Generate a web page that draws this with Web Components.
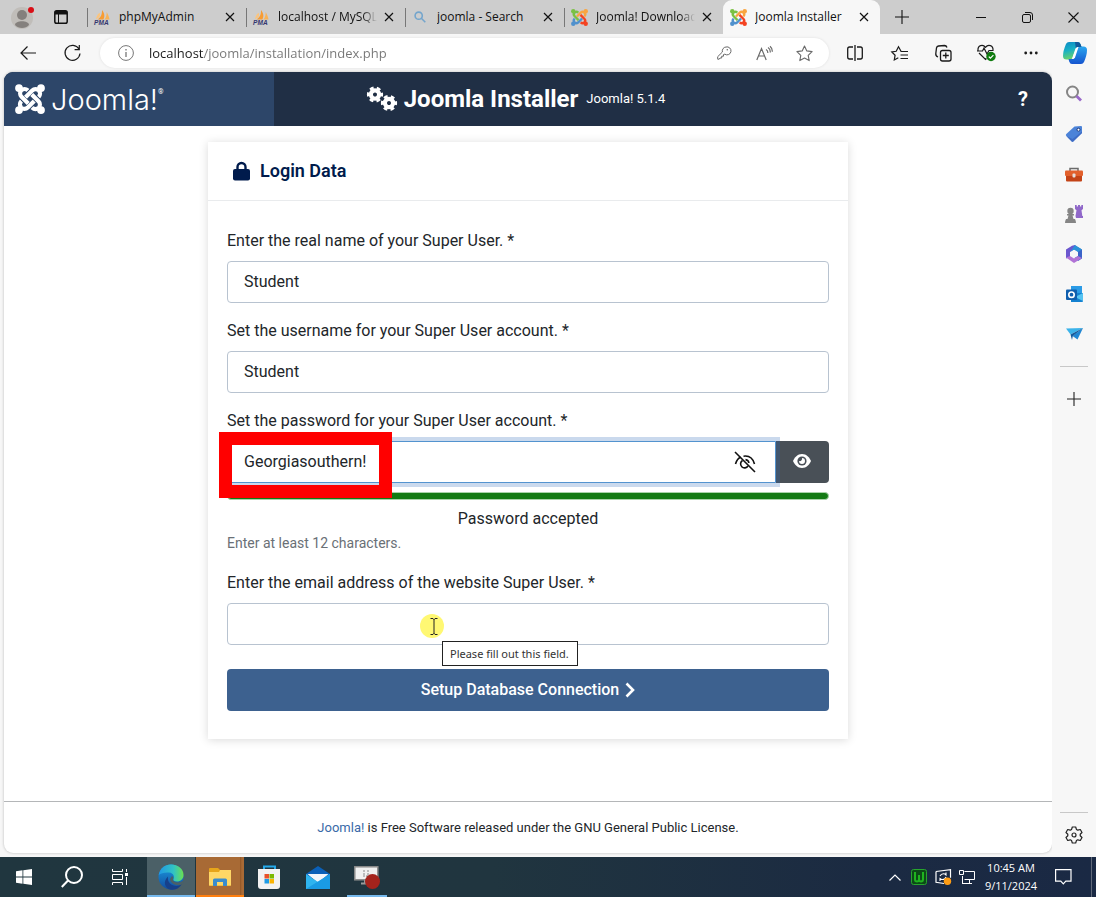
<!DOCTYPE html>
<html lang="en">
<head>
<meta charset="utf-8">
<title>Joomla Installer</title>
<style>
  html, body { margin: 0; height: 100%; }
  body { font-family: "Open Sans", sans-serif; background: #f7f7f7; color: #222; }
</style>
</head>
<body>
<desk-screen></desk-screen>

<script>
const arm = (c, gap) => [0, 90, 180, 270].map((a, i) =>
  `<g transform="rotate(${a} 12 12)" fill="none" stroke="${c[i]}">
    ${gap ? `<path d="M8.6 20.4 15.5 13.5" stroke="${gap}" stroke-width="4.6"/>` : ''}
    <path stroke-width="3.3" d="M5.2 13.6 5 13.8C3.6 15.3 3.6 17.4 5 18.9 6.4 20.3 8.7 20.3 10.2 18.8L15.6 13.4"/>
    <circle cx="3.2" cy="20.8" r="3.1" fill="${c[i]}" stroke="none"/></g>`).join('');

const gear = (x, y) => `<g transform="translate(${x} ${y})" fill="none" stroke="currentColor">
  <circle r="4.1" stroke-width="4.2"/><circle r="6.6" stroke-width="3" stroke-dasharray="3.8 3.11" stroke-dashoffset="1.9"/></g>`;

const line = (d, w = 1.2) => `<path fill="none" stroke="currentColor" stroke-width="${w}" d="${d}"/>`;

/* name: [width, height, markup] */
const ICONS = {
  avatar: [24, 24, '<circle cx="11" cy="13" r="11" fill="#c0bdb9"/><circle cx="11" cy="10" r="5" fill="#84807d"/><path d="M4 20c0-5 14-5 14 0-3 4-11 4-14 0z" fill="#84807d"/><circle cx="20" cy="5" r="3" fill="#d90e16"/>'],
  tabs: [14, 14, '<rect x=".8" y=".8" width="12.4" height="12.4" rx="1.8" fill="none" stroke="#111" stroke-width="1.5"/><path d="M1 1h12v3.5H1z" fill="#111"/><path d="M4.5 4v9" stroke="#111"/>'],
  pma: [18, 16, '<path d="M6 3c1 3 0 5-4 7 1-4 2-6 4-7z" fill="#fbc47d"/><path d="M8.500 0c3 4 3 7 1.500 10H3.500c4-2 5-5 5-10z" fill="#f89c32"/><path d="M13.500 2c1.500 3 2.500 5 3 8h-5.500c2-2 2.500-5 2.500-8z" fill="#f9b255"/><text x="0" y="16" font-family="Liberation Sans" font-size="7" font-weight="bold" font-style="italic" fill="#34376f">PMA</text>'],
  find: [12, 12, '<g fill="none" stroke="#74a5cc" stroke-width="1.6"><circle cx="4.7" cy="4.7" r="3.6"/><path d="m7.3 7.3 4 4"/></g>'],
  joomla: [24, 24, arm(['#5091cd', '#7ac143', '#f9a541', '#f44321'])],
  joomlaWhite: [24, 24, arm(['#fff', '#fff', '#fff', '#fff'], '#2d4669')],
  x: [10, 10, line('m1 1 8 8M9 1 1 9')],
  plus: [14, 14, line('M7 0v14M0 7h14', 1.1)],
  min: [10, 10, line('M0 5.5h10', 1)],
  restore: [11, 11, line('M3 2.5h4q1.5 0 1.5 1.5v5q0 1.500-1.500 1.500H2q-1.500 0-1.500-1.500V4q0-1.500 1.500-1.500zM3 .5h5q2.500 0 2.500 2.500v5', 1)],
  close: [11, 11, line('m.5.5 10 10M10.500.5l-10 10', 1.1)],
  back: [16, 14, line('M16 7H1M7.500.5 1 7l6.500 6.500', 1.2)],
  reload: [17, 17, line('M15 4A7.500 7.500 0 1 0 16 8.500M15.300 0v4.700h-4.700', 1.2)],
  info: [16, 16, '<circle cx="8" cy="8" r="7.400" fill="none" stroke="#777"/><path d="M8 7v5M8 4v1.500" stroke="#777" stroke-width="1.300"/>'],
  key: [14, 14, '<path d="M9 1a4 4 0 1 1-1.200 7.200L6.500 8.500v1.700H4.700V12H3l-.8 1.200H.7v-2.500L5.400 6A4 4 0 0 1 9 1z" fill="none" stroke="#6a6a6a"/><circle cx="10.300" cy="3.700" r=".8" fill="#6a6a6a"/>'],
  read: [17, 15, '<g fill="none" stroke="#6a6a6a" stroke-width="1.200"><path d="M.8 14 5.500 2.500 10.200 14M2.500 10h6M10 3.500q2 1 1.800 3.500M12 1.500q2.500 1.500 2.300 5M14 .3q2.500 2 2.300 5.500"/></g>'],
  star: [17, 17, '<path d="m8.500 1 2.300 4.900 5.300.7-3.900 3.700 1 5.300-4.700-2.600-4.700 2.600 1-5.300L.9 6.600l5.300-.7z" fill="none" stroke="#6a6a6a" stroke-width="1.100" stroke-linejoin="round"/>'],
  split: [16, 16, line('M6 2H2.500Q.7 2 .7 4v8q0 2 1.800 2H6M10 2h3.500q1.800 0 1.800 2v8q0 2-1.800 2H10M8 0v16', 1.3)],
  favs: [17, 15, line('M10 5.200 7.500.8 5.200 5.300.8 6l3.300 3.200L3.300 14l4-2.200M9.500 5.500H17M9.500 9H17M9.500 12.500H17', 1.2)],
  collect: [17, 17, line('M3 12Q.5 11 .8 8.500L1.500 2.800Q1.800 1.200 3.500 1l6-.5q1.800 0 2.500 2M7.500 5.500h6.500q2 0 2 2v6.500q0 2-2 2H7.500q-2 0-2-2V7.500q0-2 2-2zM10.800 7.500v6M7.800 10.500h6', 1.3)],
  heart: [20, 18, line('M1 6.500C.5 1 6 0 8.500 3.300 11 0 16.500 1 16 6.500H12L10 10 7 4 5.500 7H0M2 9l6.500 6.500 1-1', 1.2) + '<circle cx="14" cy="12.500" r="4.700" fill="#107c10"/><path d="m11.800 12.600 1.600 1.600 3-3" fill="none" stroke="#fff" stroke-width="1.200"/>'],
  dots: [14, 4, '<g fill="currentColor"><circle cx="1.700" cy="2" r="1.400"/><circle cx="7" cy="2" r="1.400"/><circle cx="12.300" cy="2" r="1.400"/></g>'],
  copilot: [24, 22, '<defs><linearGradient id="a" x2=".3" y2="1"><stop stop-color="#0d88c5"/><stop offset=".5" stop-color="#18b0c5"/><stop offset="1" stop-color="#6bd36b"/></linearGradient><linearGradient id="b" x2="0" y2="1"><stop stop-color="#2aa6ef"/><stop offset="1" stop-color="#1554cf"/></linearGradient></defs><path d="M6 0h9q2 0 2.700 2.500L18.500 5H15q-2 0-2.700 2l-3 9Q8.800 17.500 7 17.500H3.500Q0 17.500 0 14 0 9 3 2q1-2 3-2z" fill="url(#a)"/><path d="M18 22H9q-2 0-2.800-2.500L5.500 17H9q2 0 2.700-2l3-9q.5-1.500 2.300-1.500h3.500Q24 4.500 24 8q0 5-3 12-1 2-3 2z" fill="url(#b)"/><path d="M12 0h3q2 0 2.700 2.500L18.500 5H15q-1.500 0-2.200 1z" fill="#135a9c"/><path d="M13 6.500q.6-1.500 2.500-1.500L12 15.500Q11.300 17 9 17z" fill="#fff"/>'],
  search: [18, 18, '<circle cx="7.500" cy="7" r="5.500" fill="none" stroke="#858585" stroke-width="2"/><path d="m11.500 11 4.500 4.500" stroke="#9a69c9" stroke-width="2.800"/>'],
  tag: [18, 18, '<path d="M9.500 1.500 16 1q1 0 1 1v6L8.500 16.300q-1 1-2 0L1.300 11q-1-1 0-2z" fill="#4c83d8"/><path d="M1.300 11 6.500 16.300q1 1 2 0L17 8V6.500L7.500 14z" fill="#3f6cc4"/><circle cx="13.500" cy="4.700" r="1.500" fill="#fff" stroke="#1f3c7d"/>'],
  tools: [18, 15, '<path d="M5 4V1.500h8V4" fill="none" stroke="#6b6b6b" stroke-width="1.500"/><rect y="3.500" width="18" height="5.500" rx="1" fill="#e2602c"/><path d="M1 9h16v4.500q0 1-1 1H2q-1 0-1-1z" fill="#c34317"/><rect x="7.500" y="6.500" width="3" height="4" rx="1" fill="#e6dedb"/>'],
  games: [18, 18, '<g fill="#858585"><circle cx="5.500" cy="6" r="3.200"/><path d="M2 9h7v1.500H7.500L8.500 14h-6l1-3.500H2zM1 14h9q1 2 1 4H0q0-2 1-4z"/></g><path d="M10 0h1.700v1.500h1.300V0h2v1.500h1.300V0H18v4l-1.500 1.200.8 5.800H18v2h-7l-.5-2 1-5.800L10 4z" fill="#9068c9"/>'],
  m365: [18, 18, '<path d="M9 0 17 4.500v9L13 16l-3.500-3 3.500-2V7z" fill="#3a63c8"/><path d="M1 13.500v-9L7 .8 10 0l3 6-4-1.500L5 7v5z" fill="#6b57ce"/><path d="m1 12.500 4-1.500 4 2.500L13 11l4 2-8 5z" fill="#b173d6"/><path d="m5 7 5-7 7 4.500L13 7 9 4.500z" fill="#2b92d8"/>'],
  outlook: [17, 17, '<path d="M5 0h11v9H5z" fill="#2b9be6"/><path d="M5 7h12v8q0 1-1 1H5z" fill="#1481d0"/><path d="M17 7v8L9 11z" fill="#55c3f1"/><rect y="3.500" width="11" height="10.500" rx="1" fill="#0f5eae"/><circle cx="5.500" cy="8.700" r="2.700" fill="none" stroke="#fff" stroke-width="1.600"/>'],
  send: [17, 14, '<path d="M0 1.500 17 1 4.500 7.500z" fill="#3bb3ea"/><path d="M17 1 11.500 12.500 6.500 9z" fill="#1f86d3"/><path d="M4.500 7.500 17 1 6.800 9 6 13z" fill="#155a9b"/>'],
  cog: [18, 18, '<path d="m7.300 1 3.400 0 .7 2.400 1.400.8L15.300 3.500 17 6.500 15.200 8.200v1.600L17 11.500l-1.700 3-2.500-.7-1.400.8-.7 2.400H7.300l-.7-2.400-1.400-.8-2.500.7-1.700-3 1.800-1.700V8.200L1 6.500l1.700-3 2.500.7 1.400-.8z" fill="none" stroke="#222" stroke-width="1.200" stroke-linejoin="round"/><circle cx="9" cy="9" r="2" fill="none" stroke="#222" stroke-width="1.200"/>'],
  gears: [31, 26, gear(8, 8.500) + gear(22, 17)],
  lock: [17, 20, '<path d="M4.500 9V6a4 4 0 0 1 8 0v3" fill="none" stroke="#001b4c" stroke-width="2.400"/><rect y="8" width="17" height="11.500" rx="2" fill="#001b4c"/>'],
  eye: [18, 14, '<path d="M9 0c4.500 0 7.500 3.500 9 7-1.500 3.500-4.500 7-9 7S1.500 10.500 0 7c1.500-3.500 4.500-7 9-7z" fill="#fff"/><circle cx="9" cy="7" r="4.600" fill="#495057"/><path d="M9 4a3 3 0 1 1-3 3c1.800.6 3.400-.8 3-3z" fill="#fff"/>'],
  eyeoff: [22, 22, '<g fill="none" stroke="#111" stroke-width="1.600"><path d="m1 1 20 20M1.500 13Q3 7.500 7 6M9.500 5.200Q18 4 20.500 13"/><path d="M8.500 9.500a4 4 0 1 0 5.500 5.500M11.500 8.600q3 .4 3.400 3.400"/></g>'],
  chevron: [10, 16, '<path d="m1.500 1.500 6.500 6.500-6.500 6.500" fill="none" stroke="#fff" stroke-width="2.600"/>'],
  ibeam: [8, 17, '<path d="M.5.500h2.500l1 1 1-1h2.500M.5 16.500h2.500l1-1 1 1h2.500M4 1v15" fill="none" stroke="#222"/>'],
  win: [16, 16, '<path d="M0 2.200 6.500 1.300v6.200H0zM7.300 1.200 16 0v7.500H7.300zM0 8.400h6.500v6.300L0 13.800zM7.300 8.400H16V16l-8.700-1.200z" fill="#fff"/>'],
  seek: [22, 22, '<g fill="none" stroke="#fff" stroke-width="2"><circle cx="13" cy="9" r="8"/><path d="M7 14.500.8 21"/></g>'],
  task: [16, 16, '<g fill="none" stroke="#fff"><path d="M.5 0v2.500h10V0M.5 16v-2.500h10V16M.5 5.500h10v5H.5zM14.500 0v3M14.500 8v8"/></g><path d="M13 4h3v3h-3z" fill="#fff"/>'],
  edge: [26, 26, '<defs><linearGradient id="e" x2="1"><stop stop-color="#2197e5"/><stop offset=".6" stop-color="#31c3c4"/><stop offset="1" stop-color="#6be04f"/></linearGradient><linearGradient id="f" y2="1" x2="0"><stop stop-color="#1b9de2"/><stop offset="1" stop-color="#124c9f"/></linearGradient></defs><circle cx="13" cy="13" r="12.500" fill="url(#f)"/><path d="M14 12c2 1.500 1.500 3 1 4 .5 1.500 2 2.500 4.500 2.500 2.500 0 5-1 6.500-2.500l-1 4c-5 3-13 0-13-5z" fill="#4b6067"/><path d="M.7 11C2 4 7 .5 13 .5c7 0 12.500 4.500 12.500 10.500 0 4-3 6.500-6.500 6.500-3 0-4-1-3.500-2.500 1-2 .5-6-4.500-6.500C7 8.200 2.500 9 .7 11z" fill="url(#e)"/><path d="M10 12.500c-1 6 4 10 9 9.500 2-.2 4-1 5-2-3 5-8 6.500-12 5.500-5-1.500-7.500-8-2-13z" fill="#17408a"/>'],
  folder: [22, 18, '<path d="M0 1q0-1 1-1h8l2 2H22v15q0 1-1 1H1q-1 0-1-1z" fill="#e7a51a"/><path d="M0 4h10l1-2h11v15.500H0z" fill="#ffd766"/><path d="M4 18v-6q0-1.500 1.500-1.500h11Q18 10.500 18 12v6h-4v-4H8v4z" fill="#3a8ccc"/>'],
  store: [24, 24, '<path d="M7 5V1.500h11V5" fill="none" stroke="#25a9ea" stroke-width="2"/><path d="M1 4h22v17q0 3-3 3H4q-3 0-3-3z" fill="#f2f2f2"/><path d="M7.500 9H12v4.500H7.500z" fill="#e9512a"/><path d="M12.500 9H17v4.500h-4.500z" fill="#7cb900"/><path d="M7.500 14H12v4.500H7.500z" fill="#1e9be6"/><path d="M12.500 14H17v4.500h-4.500z" fill="#fbb403"/>'],
  mail: [24, 23, '<path d="M0 8 12 0l12 8v4H0z" fill="#0a60b8"/><path d="M1.500 8h21L12 17z" fill="#f1f6fb"/><path d="M0 8v15h24V8L12 16z" fill="#2fb4ef"/><path d="M0 23 24 8v15z" fill="#1a9be4"/>'],
  rec: [27, 24, '<rect x=".8" y="1.800" width="23" height="13" fill="#f0f0f0" stroke="#8c8c8c" stroke-width="1.500"/><path d="M10 5v5M14 5v5M9 11h6" stroke="#888" stroke-dasharray="2 1"/><path d="M7 18.500h9M11 15v3" stroke="#999" stroke-width="2"/><circle cx="18.500" cy="16.500" r="7.500" fill="#a4231c"/>'],
  up: [12, 7, '<path d="m.5 6.500 5.500-5.500 5.500 5.500" fill="none" stroke="#fff" stroke-width="1.200"/>'],
  wacom: [16, 16, '<rect x=".5" y=".5" width="15" height="15" rx="2" fill="#0c4a17" stroke="#27a52d"/><path d="M4 3v7.500q0 2 2 2 2 0 2-2V6v4.500q0 2 2 2 2 0 2-2V3" fill="none" stroke="#1fb41f" stroke-width="2"/>'],
  update: [17, 16, '<path d="M1 2.500 15.500.7v8M9 14.500 1 13.300V2.500" fill="none" stroke="#fff" stroke-width="1.200"/><path d="M5 7q1.500-3 5-2l1 1V3.500M11 8q-1 3-4.500 2.500L5 9.500V12" fill="none" stroke="#fff" stroke-width="1.100"/><circle cx="12.500" cy="12.300" r="3.700" fill="#ff9d14"/>'],
  net: [16, 14, '<path d="M5.500 1.500h10v8h-10M3.500 6v7.500M10.500 9.500v4M3 13.500h10M.5.500h4v4H.5z" fill="none" stroke="#fff"/>'],
  note: [17, 16, '<path d="M.6.600h15.400v11.500h-5.200L8.300 14.800 5.800 12.100H.6z" fill="none" stroke="#fff" stroke-width="1.200"/>'],
};

class UiIcon extends HTMLElement {
  connectedCallback() {
    const [w, h, art] = ICONS[this.getAttribute('name')];
    const s = Number(this.getAttribute('size')) || w;
    this.attachShadow({ mode: 'open' }).innerHTML =
      `<style>:host{display:inline-flex;flex:none}svg{display:block;overflow:visible}</style>
       <svg aria-hidden="true" width="${s}" height="${Math.round(h * s / w)}" viewBox="0 0 ${w} ${h}">${art}</svg>`;
  }
}
customElements.define('ui-icon', UiIcon);

function define(name, render) {
  customElements.define(name, class extends HTMLElement {
    connectedCallback() {
      if (this.shadowRoot) return;
      this.attachShadow({ mode: 'open' }).innerHTML = '<style>*{box-sizing:border-box}[hidden]{display:none}</style>' + render(this);
    }
  });
}

define('icon-button', el => `
  <style>
    :host { display: flex; flex: none; }
    button { flex: 1; display: flex; align-items: center; justify-content: center; padding: 0; border: 0; background: none; color: inherit; }
  </style>
  <button type="button" aria-label="${el.getAttribute('label')}"><ui-icon name="${el.getAttribute('icon')}"></ui-icon></button>`);

define('browser-tab', el => `
  <style>
    :host { box-sizing: border-box; flex: 0 1 159px; min-width: 0; height: 34px; display: flex; align-items: center; padding: 0 8px 0 6px;
      background: linear-gradient(#777, #777) 0 8px / 1px 19px no-repeat; font-size: 12px; line-height: 18px; color: #111; }
    :host([active]) { flex-basis: 157px; background: #f7f7f7; border-radius: 9px 9px 0 0; }
    .icon { flex: none; width: 18px; display: flex; justify-content: center; margin-right: 8px; }
    .title { flex: 1; min-width: 0; overflow: hidden; white-space: nowrap; }
    :host([long]) .title { -webkit-mask-image: linear-gradient(90deg, #000 85%, transparent); mask-image: linear-gradient(90deg, #000 85%, transparent); }
    icon-button { width: 16px; height: 20px; margin-left: 4px; }
  </style>
  <span class="icon"><ui-icon name="${el.getAttribute('icon')}" size="${el.getAttribute('icon') === 'find' ? 12 : 17}"></ui-icon></span>
  <span class="title"><slot></slot></span>
  <icon-button icon="x" label="Close tab"></icon-button>`);

define('tab-strip', () => `
  <style>
    :host { display: flex; height: 34px; background: #cdcdcd; color: #111; }
    .lead { flex: none; width: 87px; display: flex; align-items: center; gap: 14px; padding-left: 11px; }
    .lead icon-button { width: 24px; }
    .tabs { flex: 0 1 793px; min-width: 0; display: flex; }
    .add { width: 44px; }
    .win { margin-left: auto; display: flex; } .win icon-button { width: 46px; }
  </style>
  <div class="lead"><icon-button icon="avatar" label="Profile"></icon-button><icon-button icon="tabs" label="Tab actions"></icon-button></div>
  <div class="tabs">
    <browser-tab icon="pma">phpMyAdmin</browser-tab>
    <browser-tab icon="pma" long>localhost / MySQL</browser-tab>
    <browser-tab icon="find">joomla - Search</browser-tab>
    <browser-tab icon="joomla" long>Joomla! Downloads</browser-tab>
    <browser-tab icon="joomla" active>Joomla Installer</browser-tab>
  </div>
  <icon-button class="add" icon="plus" label="New tab"></icon-button>
  <div class="win">
    <icon-button icon="min" label="Minimize"></icon-button>
    <icon-button icon="restore" label="Restore"></icon-button>
    <icon-button icon="close" label="Close"></icon-button>
  </div>`);

define('address-bar', () => `
  <style>
    :host { display: flex; align-items: center; height: 38px; padding-left: 6px; background: #f7f7f7; color: #1a1a1a; }
    icon-button { width: 44px; height: 30px; }
    .pill { flex: 1; min-width: 0; height: 30px; margin: 0 4px 0 6px; padding: 0 5px 0 18px; display: flex; align-items: center; gap: 15px;
      background: #fff; border-radius: 15px; box-shadow: 0 0 3px #0000001a; }
    input { flex: 1; min-width: 0; height: 24px; padding: 0; border: 0; outline: 0; font: 13px/24px "Open Sans", sans-serif; color: #767676;
      background: linear-gradient(90deg, #1a1a1a 55px, #767676 55px); -webkit-background-clip: text; background-clip: text; -webkit-text-fill-color: transparent; }
    .in { display: flex; } .in icon-button { width: 40px; }
    .last { width: 43px; }
  </style>
  <icon-button icon="back" label="Back"></icon-button><icon-button icon="reload" label="Refresh"></icon-button>
  <div class="pill"><ui-icon name="info"></ui-icon>
    <input type="text" aria-label="Address" value="localhost/joomla/installation/index.php">
    <div class="in"><icon-button icon="key" label="Passwords"></icon-button><icon-button icon="read" label="Read aloud"></icon-button><icon-button icon="star" label="Add to favorites"></icon-button></div>
  </div>
  <icon-button icon="split" label="Split screen"></icon-button><icon-button icon="favs" label="Favorites"></icon-button>
  <icon-button icon="collect" label="Collections"></icon-button><icon-button icon="heart" label="Browser essentials"></icon-button>
  <icon-button icon="dots" label="Settings and more"></icon-button><icon-button class="last" icon="copilot" label="Copilot"></icon-button>`);

define('side-bar', () => `
  <style>
    :host { box-sizing: border-box; flex: none; width: 44px; display: flex; flex-direction: column; padding-top: 2px; background: #f7f7f7; color: #222; }
    icon-button { height: 40px; }
    hr { width: 28px; height: 1px; margin: 12px auto; border: 0; background: #c8c8c8; }
    .low { margin: auto auto 2px; }
    .set { margin-bottom: 2px; }
  </style>
  ${['search', 'tag', 'tools', 'games', 'm365', 'outlook', 'send'].map((n, i) => `<icon-button icon="${n}" label="${['Search', 'Shopping', 'Tools', 'Games', 'Microsoft 365', 'Outlook', 'Drop'][i]}"></icon-button>`).join('')}
  <hr><icon-button icon="plus" label="Customize"></icon-button>
  <hr class="low"><icon-button class="set" icon="cog" label="Settings"></icon-button>`);

define('site-header', () => `
  <style>
    :host { display: grid; grid-template-columns: 270px 1fr 294px; height: 54px; background: #202f45; color: #fff; font-family: Roboto, sans-serif; }
    .logo { display: flex; align-items: center; gap: 6px; padding-left: 11px; background: #2d4669; }
    .word { padding-top: 2px; font: 300 29px/40px Inter, sans-serif; }
    sup { font-size: 7px; line-height: 8px; align-self: flex-start; margin: 16px 0 0 -6px; }
    .title { display: flex; align-items: center; justify-content: center; white-space: nowrap; }
    h1 { margin: 0 8px 0 6px; font-size: 24px; line-height: 32px; font-weight: 700; }
    .ver { font-size: 13px; line-height: 20px; }
    .help { justify-self: end; width: 58px; padding: 0; border: 0; background: none; color: #fff; font: 700 20px/24px Roboto, sans-serif; }
  </style>
  <div class="logo"><ui-icon name="joomlaWhite" size="30"></ui-icon><span class="word">Joomla!</span><sup>®</sup></div>
  <div class="title"><ui-icon name="gears"></ui-icon><h1>Joomla Installer</h1><span class="ver">Joomla! 5.1.4</span></div>
  <button class="help" type="button" aria-label="Help">?</button>`);

define('form-field', el => {
  const pw = el.hasAttribute('secret');
  return `
  <style>
    :host { display: block; }
    label { display: block; margin-bottom: 8px; font-size: 16px; line-height: 24px; color: #22262a; }
    .row { position: relative; display: flex; }
    input { flex: 1; min-width: 0; height: 42px; padding: 0 16px 2px; border: 1px solid #b8c3d0; border-radius: 4px; outline: 0; background: #fff; color: #22262a; font: 16px/24px Roboto, sans-serif; }
    .secret input { z-index: 1; padding-right: 50px; border-color: #5393cf; border-radius: 4px 0 0 4px; box-shadow: 0 0 0 4px #2a69b840; }
    .off { position: absolute; z-index: 2; right: 72px; top: 10px; width: 24px; height: 22px; }
    .show { flex: none; width: 53px; height: 42px; border: 0; padding: 0 2px 2px 0; border-radius: 0 4px 4px 0; background: #495057; display: flex; justify-content: center; align-items: center; }
    .mark { position: absolute; z-index: 3; left: -8px; top: -9px; width: 173px; height: 66px; border: 13px solid #f00; pointer-events: none; }
  </style>
  <label for="f">${el.getAttribute('label')}</label>
  <div class="row ${pw ? 'secret' : ''}"><input id="f" type="${el.getAttribute('type') || 'text'}" value="${el.getAttribute('value') || ''}">
  ${pw ? `<icon-button class="off" icon="eyeoff" label="Hide password"></icon-button>
    <button class="show" type="button" aria-label="Show password"><ui-icon name="eye"></ui-icon></button><span class="mark"></span>` : ''}
  <slot></slot></div>`;
});

define('login-card', () => `
  <style>
    :host { display: block; width: 100%; max-width: 640px; background: #fff; box-shadow: 0 1px 9px #00000026; font-family: Roboto, sans-serif; color: #22262a; }
    header { display: flex; align-items: center; gap: 10px; height: 59px; padding: 0 25px; border-bottom: 1px solid #e9ebed; }
    h2 { margin: 0; font-size: 18px; line-height: 24px; font-weight: 600; color: #001b4c; }
    form { display: flex; flex-direction: column; gap: 16px; padding: 28px 19px; }
    .strength { margin-top: -7px; display: flex; flex-direction: column; }
    meter { appearance: none; -webkit-appearance: none; display: block; width: 100%; height: 8px; border: 1px solid #a9d3a9; border-radius: 4px; background: #147a14; }
    meter::-webkit-meter-inner-element { display: none; }
    .ok { margin-top: 7px; text-align: center; font-size: 16px; line-height: 24px; }
    .hint { font-size: 14px; line-height: 24px; color: #6a7076; }
    .tip { position: absolute; z-index: 4; left: 215px; top: 38px; height: 25px; padding: 0 8px 0 7px; border: 1px solid #222; background: #fff; color: #333; font: 11px/23px "Noto Sans", sans-serif; white-space: nowrap; }
    .spot { position: absolute; left: 193px; top: 11px; width: 24px; height: 24px; border-radius: 50%; background: #fff873; display: flex; align-items: center; justify-content: center; padding-left: 4px; }
    .go { height: 42px; margin-top: 8px; border: 0; border-radius: 4px; background: #3d618f; color: #fff; font: 500 16px/24px Roboto, sans-serif; display: flex; align-items: center; justify-content: center; gap: 6px; }
  </style>
  <header><ui-icon name="lock"></ui-icon><h2>Login Data</h2></header>
  <form>
    <form-field label="Enter the real name of your Super User. *" value="Student"></form-field>
    <form-field label="Set the username for your Super User account. *" value="Student"></form-field>
    <form-field secret label="Set the password for your Super User account. *" value="Georgiasouthern!"></form-field>
    <div class="strength"><meter min="0" max="100" low="40" high="99" optimum="100" value="100" aria-label="Password strength"></meter>
      <span class="ok">Password accepted</span><span class="hint">Enter at least 12 characters.</span></div>
    <form-field type="email" label="Enter the email address of the website Super User. *">
      <span class="spot"><ui-icon name="ibeam"></ui-icon></span><span class="tip" role="tooltip">Please fill out this field.</span>
    </form-field>
    <button class="go" type="button">Setup Database Connection <ui-icon name="chevron"></ui-icon></button>
  </form>`);

define('installer-page', () => `
  <style>
    :host { flex: 1; min-width: 0; display: flex; flex-direction: column; margin: 0 0 4px 4px; overflow: hidden; border-radius: 9px; background: #fff; box-shadow: 0 0 3px #00000040; }
    main { flex: 1; display: flex; justify-content: center; align-items: flex-start; padding: 16px 16px 24px; }
    footer { height: 52px; border-top: 1px solid #b4b6b8; display: flex; align-items: center; justify-content: center; font: 13px/20px Roboto, sans-serif; color: #22262a; }
    a { color: #3a6aa8; text-decoration: none; }
  </style>
  <site-header></site-header>
  <main><login-card></login-card></main>
  <footer><p><a href="#">Joomla!</a> is Free Software released under the GNU General Public License.</p></footer>`);

define('task-bar', () => `
  <style>
    :host { display: flex; height: 40px; background: linear-gradient(90deg, #20363f, #20353f 45%, #1b2a42 80%, #1a2944); color: #fff; }
    .sys, .apps { display: flex; } .sys icon-button { width: 48px; }
    .apps { gap: 1px; margin-left: 3px; } .apps icon-button { width: 48px; }
    .edge { background: #4b6067; box-shadow: inset 0 -2px #76b9ed; }
    .files { background: linear-gradient(90deg, #a86a35 44px, #8f5525 44px, #a86a35 46px); box-shadow: inset 0 -2px #ff7f0e; }
    .rec { background: linear-gradient(#76b9ed, #76b9ed) 4px 38px / 40px 2px no-repeat; }
    .tray { margin: 0 4px 0 auto; display: flex; align-items: center; padding-right: 4px; border-right: 1px solid #60697a; }
    .tray icon-button { width: 24px; height: 40px; }
    time { width: 60px; text-align: center; font-size: 11px; line-height: 18px; white-space: nowrap; padding-left: 4px; }
    .tray .note { width: 48px; }
  </style>
  <div class="sys"><icon-button icon="win" label="Start"></icon-button><icon-button icon="seek" label="Search"></icon-button><icon-button icon="task" label="Task view"></icon-button></div>
  <div class="apps"><icon-button class="edge" icon="edge" label="Edge"></icon-button><icon-button class="files" icon="folder" label="File Explorer"></icon-button>
    <icon-button icon="store" label="Store"></icon-button><icon-button icon="mail" label="Mail"></icon-button><icon-button class="rec" icon="rec" label="Recorder"></icon-button></div>
  <div class="tray"><icon-button icon="up" label="Hidden icons"></icon-button><icon-button icon="wacom" label="Tablet"></icon-button><icon-button icon="update" label="Updates"></icon-button><icon-button icon="net" label="Network"></icon-button>
    <time>10:45 AM<br>9/11/2024</time><icon-button class="note" icon="note" label="Notifications"></icon-button></div>`);

define('desk-screen', () => `
  <style>
    :host { display: flex; flex-direction: column; min-height: 100vh; }
    .body { flex: 1; display: flex; }
  </style>
  <tab-strip></tab-strip><address-bar></address-bar>
  <div class="body"><installer-page></installer-page><side-bar></side-bar></div>
  <task-bar></task-bar>`);
</script>
</body>
</html>
